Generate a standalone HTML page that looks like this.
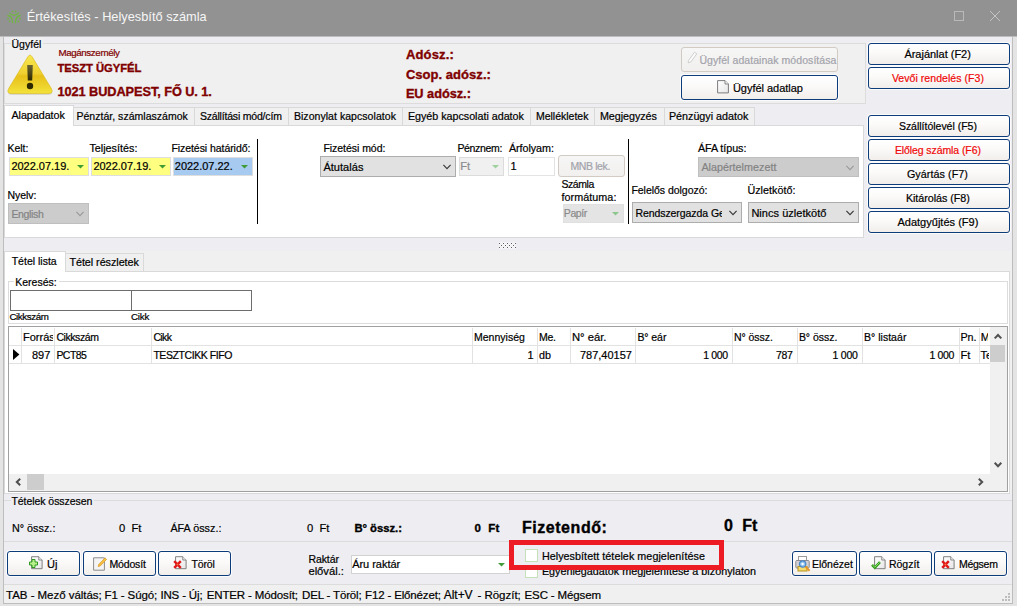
<!DOCTYPE html><html lang="hu"><head><meta charset="utf-8"><title>Értékesítés - Helyesbítő számla</title><style>html,body{margin:0;padding:0;}body{width:1017px;height:606px;overflow:hidden;position:relative;background:#eeeef2;font-family:"Liberation Sans", sans-serif;font-size:11px;color:#000;}.a{position:absolute;box-sizing:border-box;}.t{position:absolute;white-space:pre;line-height:20px;height:20px;-webkit-text-stroke:0.2px currentColor;}svg{position:absolute;overflow:visible;}</style></head><body>
<div class="a" style="left:0px;top:0px;width:1017px;height:36px;background:#929292;"></div>
<div class="a" style="left:0px;top:36px;width:1017px;height:1px;background:#bcbcbe;"></div>
<div class="a" style="left:0px;top:37px;width:3px;height:569px;background:#e4e4e4;"></div>
<div class="a" style="left:3px;top:37px;width:1px;height:567px;background:#bdbdbd;"></div>
<div class="a" style="left:1013px;top:37px;width:4px;height:569px;background:#e4e4e4;"></div>
<div class="a" style="left:1012px;top:37px;width:1px;height:567px;background:#bdbdbd;"></div>
<div class="a" style="left:0px;top:604px;width:1017px;height:2px;background:#e4e4e4;"></div>
<div class="a" style="left:3px;top:603px;width:1010px;height:1px;background:#bdbdbd;"></div>
<svg style="left:0px;top:0px" width="30" height="30" viewBox="0 0 30 30"><g fill="none" stroke="#70b545" stroke-width="1.3" stroke-linecap="round"><path d="M9.6 13.1 Q14 17.4 18.6 12.9"/><path d="M7.9 15.5 Q12.6 16.4 12.5 22.6"/><path d="M20.3 15.5 Q15.5 16.2 15.4 22.8"/></g><g fill="#70b545"><circle cx="12.5" cy="11.4" r="0.85"/><circle cx="15.6" cy="11.4" r="0.85"/><circle cx="8" cy="18.7" r="0.85"/><circle cx="9.6" cy="21.3" r="0.85"/><circle cx="20" cy="18.7" r="0.85"/><circle cx="18.5" cy="21.4" r="0.85"/></g></svg>
<div class="a" style="left:954px;top:11px;width:10px;height:10px;border:1px solid #b9b9b9;"></div>
<svg style="left:990px;top:11px" width="10" height="10" viewBox="0 0 10 10"><path d="M0 0 L10 10 M10 0 L0 10" stroke="#c4c4c4" stroke-width="1" fill="none"/></svg>
<div class="a" style="left:4px;top:43px;width:862px;height:61px;background:#f0f0f0;border:1px solid #dcdcdc;"></div>
<div class="a" style="left:11px;top:38px;width:32px;height:12px;background:#f0f0f0;"></div>
<svg style="left:7px;top:53px" width="47" height="44" viewBox="0 0 47 44">
<defs><linearGradient id="wg" x1="0" y1="0" x2="0" y2="1"><stop offset="0" stop-color="#f6e84e"/><stop offset="0.48" stop-color="#efd030"/><stop offset="0.54" stop-color="#e8c01a"/><stop offset="1" stop-color="#f2e23a"/></linearGradient>
<linearGradient id="wx" x1="0" y1="0" x2="0" y2="1"><stop offset="0" stop-color="#6a6432"/><stop offset="1" stop-color="#2e2800"/></linearGradient></defs>
<path d="M25.3 4.1 L44.0 35.0 Q47.4 40.6 40.9 40.6 L5.1 40.6 Q-1.4 40.6 2.0 35.0 L20.7 4.1 Q23.0 0.2 25.3 4.1 Z" fill="#d9d9d9" transform="translate(0,1.5)"/>
<path d="M25.3 4.1 L44.0 35.0 Q47.4 40.6 40.9 40.6 L5.1 40.6 Q-1.4 40.6 2.0 35.0 L20.7 4.1 Q23.0 0.2 25.3 4.1 Z" fill="url(#wg)" stroke="#e0c228" stroke-width="0.8"/>
<path d="M20.2 12 L25.8 12 L25.2 27.6 L20.8 27.6 Z" fill="url(#wx)"/><circle cx="23" cy="33" r="3.2" fill="#2e2800"/></svg>
<div class="a" style="left:681px;top:47px;width:157px;height:25px;background:linear-gradient(#f6f6f6,#f1f0ee);border:1px solid #d2cbc4;border-radius:3px;"></div>
<svg style="left:687px;top:51px" width="11" height="13" viewBox="0 0 11 13"><path d="M1.5 9.5 L7.5 1.2 L9.8 2.8 L3.8 11 L1.2 11.8 Z" fill="#fbfbfb" stroke="#c9c9c9" stroke-width="0.9"/></svg>
<div class="a" style="left:681px;top:75px;width:157px;height:25px;background:linear-gradient(#ffffff 0%,#fbfaf9 45%,#f1eeeb 100%);border:1px solid #0d3c7a;border-radius:3px;box-shadow:0 0 0 1px rgba(255,255,255,0.75);"></div>
<svg style="left:717px;top:80px" width="12" height="13.5" viewBox="0 0 12 13.5"><defs><linearGradient id="pg717" x1="0" y1="0" x2="1" y2="1"><stop offset="0" stop-color="#ffffff"/><stop offset="1" stop-color="#e6e6e6"/></linearGradient></defs><path d="M0.6 0.6 L8 0.6 L11.4 4 L11.4 12.9 L0.6 12.9 Z" fill="url(#pg717)" stroke="#7c7c7c" stroke-width="1"/><path d="M8 0.6 L8 4 L11.4 4" fill="#f4f4f4" stroke="#7c7c7c" stroke-width="0.9"/></svg>
<div class="a" style="left:868px;top:43px;width:142px;height:22px;background:linear-gradient(#ffffff 0%,#fbfaf9 45%,#f1eeeb 100%);border:1px solid #0d3c7a;border-radius:3px;box-shadow:0 0 0 1px rgba(255,255,255,0.75);"></div>
<div class="a" style="left:868px;top:67px;width:142px;height:22px;background:linear-gradient(#ffffff 0%,#fbfaf9 45%,#f1eeeb 100%);border:1px solid #0d3c7a;border-radius:3px;box-shadow:0 0 0 1px rgba(255,255,255,0.75);"></div>
<div class="a" style="left:868px;top:115px;width:142px;height:22px;background:linear-gradient(#ffffff 0%,#fbfaf9 45%,#f1eeeb 100%);border:1px solid #0d3c7a;border-radius:3px;box-shadow:0 0 0 1px rgba(255,255,255,0.75);"></div>
<div class="a" style="left:868px;top:139px;width:142px;height:22px;background:linear-gradient(#ffffff 0%,#fbfaf9 45%,#f1eeeb 100%);border:1px solid #0d3c7a;border-radius:3px;box-shadow:0 0 0 1px rgba(255,255,255,0.75);"></div>
<div class="a" style="left:868px;top:163px;width:142px;height:22px;background:linear-gradient(#ffffff 0%,#fbfaf9 45%,#f1eeeb 100%);border:1px solid #0d3c7a;border-radius:3px;box-shadow:0 0 0 1px rgba(255,255,255,0.75);"></div>
<div class="a" style="left:868px;top:187px;width:142px;height:22px;background:linear-gradient(#ffffff 0%,#fbfaf9 45%,#f1eeeb 100%);border:1px solid #0d3c7a;border-radius:3px;box-shadow:0 0 0 1px rgba(255,255,255,0.75);"></div>
<div class="a" style="left:868px;top:211px;width:142px;height:22px;background:linear-gradient(#ffffff 0%,#fbfaf9 45%,#f1eeeb 100%);border:1px solid #0d3c7a;border-radius:3px;box-shadow:0 0 0 1px rgba(255,255,255,0.75);"></div>
<div class="a" style="left:4px;top:125px;width:860px;height:113px;background:#fff;border:1px solid #d9d9d9;"></div>
<div class="a" style="left:72px;top:107px;width:683px;height:19px;background:#f0f0f0;border:1px solid #d9d9d9;"></div>
<div class="a" style="left:194px;top:108px;width:1px;height:17px;background:#d9d9d9;"></div>
<div class="a" style="left:288px;top:108px;width:1px;height:17px;background:#d9d9d9;"></div>
<div class="a" style="left:402px;top:108px;width:1px;height:17px;background:#d9d9d9;"></div>
<div class="a" style="left:530px;top:108px;width:1px;height:17px;background:#d9d9d9;"></div>
<div class="a" style="left:594px;top:108px;width:1px;height:17px;background:#d9d9d9;"></div>
<div class="a" style="left:664px;top:108px;width:1px;height:17px;background:#d9d9d9;"></div>
<div class="a" style="left:754px;top:108px;width:1px;height:17px;background:#d9d9d9;"></div>
<div class="a" style="left:4px;top:105px;width:70px;height:21px;background:#fff;border:1px solid #d9d9d9;border-bottom:none;"></div>
<div class="a" style="left:9px;top:157px;width:80px;height:19px;background:#ffff80;border:1px solid #dedede;"></div>
<svg style="left:77px;top:165px" width="7" height="4" viewBox="0 0 7 4"><path d="M0 0 L7 0 L3.5 3.6 Z" fill="#3f9c35"/></svg>
<div class="a" style="left:91px;top:157px;width:80px;height:19px;background:#ffff80;border:1px solid #dedede;"></div>
<svg style="left:159px;top:165px" width="7" height="4" viewBox="0 0 7 4"><path d="M0 0 L7 0 L3.5 3.6 Z" fill="#3f9c35"/></svg>
<div class="a" style="left:173px;top:157px;width:80px;height:19px;background:#a6caf0;border:1px solid #dedede;"></div>
<svg style="left:241px;top:165px" width="7" height="4" viewBox="0 0 7 4"><path d="M0 0 L7 0 L3.5 3.6 Z" fill="#3f9c35"/></svg>
<div class="a" style="left:257px;top:139px;width:1px;height:85px;background:#000;"></div>
<div class="a" style="left:8px;top:203px;width:81px;height:21px;background:#cccccc;border:1px solid #bfbfbf;"></div>
<svg style="left:76px;top:211px" width="8" height="5" viewBox="0 0 8 5"><path d="M0.4 0.9 L4 4.6 L7.6 0.9" fill="none" stroke="#9a9a9a" stroke-width="1.15"/></svg>
<div class="a" style="left:320px;top:156px;width:136px;height:21px;background:#e1e1e1;border:1px solid #adadad;"></div>
<svg style="left:443px;top:164px" width="8" height="5" viewBox="0 0 8 5"><path d="M0.4 0.9 L4 4.6 L7.6 0.9" fill="none" stroke="#383838" stroke-width="1.15"/></svg>
<div class="a" style="left:459px;top:157px;width:45px;height:19px;background:#f0f0f0;border:1px solid #dcdcdc;"></div>
<svg style="left:492px;top:165px" width="7" height="4" viewBox="0 0 7 4"><path d="M0 0 L7 0 L3.5 3.6 Z" fill="#9fd09f"/></svg>
<div class="a" style="left:508px;top:157px;width:47px;height:19px;background:#fff;border:1px solid #e3e3e3;"></div>
<div class="a" style="left:558px;top:155px;width:67px;height:22px;background:linear-gradient(#f6f6f6,#f1f0ee);border:1px solid #d2cbc4;border-radius:3px;"></div>
<div class="a" style="left:563px;top:204px;width:61px;height:19px;background:#e4e4e4;border:1px solid #e0e0e0;"></div>
<svg style="left:612px;top:212px" width="7" height="4" viewBox="0 0 7 4"><path d="M0 0 L7 0 L3.5 3.6 Z" fill="#8cc68c"/></svg>
<div class="a" style="left:628px;top:139px;width:1px;height:85px;background:#000;"></div>
<div class="a" style="left:698px;top:157px;width:161px;height:20px;background:#cccccc;border:1px solid #bfbfbf;"></div>
<svg style="left:846px;top:165px" width="8" height="5" viewBox="0 0 8 5"><path d="M0.4 0.9 L4 4.6 L7.6 0.9" fill="none" stroke="#9a9a9a" stroke-width="1.15"/></svg>
<div class="a" style="left:632px;top:202px;width:110px;height:21px;background:#e1e1e1;border:1px solid #adadad;"></div>
<svg style="left:729px;top:210px" width="8" height="5" viewBox="0 0 8 5"><path d="M0.4 0.9 L4 4.6 L7.6 0.9" fill="none" stroke="#383838" stroke-width="1.15"/></svg>
<div class="a" style="left:748px;top:202px;width:111px;height:21px;background:#e1e1e1;border:1px solid #adadad;"></div>
<svg style="left:846px;top:210px" width="8" height="5" viewBox="0 0 8 5"><path d="M0.4 0.9 L4 4.6 L7.6 0.9" fill="none" stroke="#383838" stroke-width="1.15"/></svg>
<div class="a" style="left:4px;top:251px;width:1008px;height:243px;background:#f0f0f0;"></div>
<svg style="left:498px;top:242px" width="19" height="7" viewBox="0 0 19 7" shape-rendering="crispEdges"><g fill="#fafafc"><rect x="1" y="0" width="1" height="1"/><rect x="3" y="0" width="1" height="1"/><rect x="5" y="0" width="1" height="1"/><rect x="7" y="0" width="1" height="1"/><rect x="9" y="0" width="1" height="1"/><rect x="11" y="0" width="1" height="1"/><rect x="13" y="0" width="1" height="1"/><rect x="15" y="0" width="1" height="1"/><rect x="17" y="0" width="1" height="1"/><rect x="2" y="1" width="1" height="1"/><rect x="4" y="1" width="1" height="1"/><rect x="6" y="1" width="1" height="1"/><rect x="8" y="1" width="1" height="1"/><rect x="10" y="1" width="1" height="1"/><rect x="12" y="1" width="1" height="1"/><rect x="14" y="1" width="1" height="1"/><rect x="16" y="1" width="1" height="1"/><rect x="1" y="2" width="1" height="1"/><rect x="3" y="2" width="1" height="1"/><rect x="5" y="2" width="1" height="1"/><rect x="7" y="2" width="1" height="1"/><rect x="9" y="2" width="1" height="1"/><rect x="11" y="2" width="1" height="1"/><rect x="13" y="2" width="1" height="1"/><rect x="15" y="2" width="1" height="1"/><rect x="17" y="2" width="1" height="1"/><rect x="2" y="3" width="1" height="1"/><rect x="4" y="3" width="1" height="1"/><rect x="6" y="3" width="1" height="1"/><rect x="8" y="3" width="1" height="1"/><rect x="10" y="3" width="1" height="1"/><rect x="12" y="3" width="1" height="1"/><rect x="14" y="3" width="1" height="1"/><rect x="16" y="3" width="1" height="1"/><rect x="1" y="4" width="1" height="1"/><rect x="3" y="4" width="1" height="1"/><rect x="5" y="4" width="1" height="1"/><rect x="7" y="4" width="1" height="1"/><rect x="9" y="4" width="1" height="1"/><rect x="11" y="4" width="1" height="1"/><rect x="13" y="4" width="1" height="1"/><rect x="15" y="4" width="1" height="1"/><rect x="17" y="4" width="1" height="1"/><rect x="2" y="5" width="1" height="1"/><rect x="4" y="5" width="1" height="1"/><rect x="6" y="5" width="1" height="1"/><rect x="8" y="5" width="1" height="1"/><rect x="10" y="5" width="1" height="1"/><rect x="12" y="5" width="1" height="1"/><rect x="14" y="5" width="1" height="1"/><rect x="16" y="5" width="1" height="1"/><rect x="1" y="6" width="1" height="1"/><rect x="3" y="6" width="1" height="1"/><rect x="5" y="6" width="1" height="1"/><rect x="7" y="6" width="1" height="1"/><rect x="9" y="6" width="1" height="1"/><rect x="11" y="6" width="1" height="1"/><rect x="13" y="6" width="1" height="1"/><rect x="15" y="6" width="1" height="1"/><rect x="17" y="6" width="1" height="1"/></g><g fill="#5c5c5c"><rect x="1" y="1" width="1" height="1"/><rect x="5" y="1" width="1" height="1"/><rect x="9" y="1" width="1" height="1"/><rect x="13" y="1" width="1" height="1"/><rect x="17" y="1" width="1" height="1"/><rect x="3" y="3" width="1" height="1"/><rect x="7" y="3" width="1" height="1"/><rect x="11" y="3" width="1" height="1"/><rect x="15" y="3" width="1" height="1"/><rect x="1" y="5" width="1" height="1"/><rect x="5" y="5" width="1" height="1"/><rect x="9" y="5" width="1" height="1"/><rect x="13" y="5" width="1" height="1"/><rect x="17" y="5" width="1" height="1"/></g></svg>
<div class="a" style="left:4px;top:271px;width:1006px;height:223px;background:#fff;border:1px solid #d9d9d9;"></div>
<div class="a" style="left:65px;top:253px;width:79px;height:19px;background:#f0f0f0;border:1px solid #d9d9d9;"></div>
<div class="a" style="left:4px;top:251px;width:62px;height:21px;background:#fff;border:1px solid #d9d9d9;border-bottom:none;"></div>
<div class="a" style="left:8px;top:281px;width:1000px;height:43px;border:1px solid #dcdcdc;"></div>
<div class="a" style="left:14px;top:276px;width:45px;height:12px;background:#fff;"></div>
<div class="a" style="left:10px;top:290px;width:122px;height:21px;background:#fff;border:1px solid #6d6d6d;"></div>
<div class="a" style="left:131px;top:290px;width:121px;height:21px;background:#fff;border:1px solid #6d6d6d;"></div>
<div class="a" style="left:8px;top:326px;width:1000px;height:166px;background:#fff;border:1px solid #a0a0a0;"></div>
<div class="a" style="left:9px;top:345px;width:981px;height:1px;background:#e2e2e2;"></div>
<div class="a" style="left:9px;top:363px;width:981px;height:1px;background:#e2e2e2;"></div>
<div class="a" style="left:21px;top:328px;width:1px;height:36px;background:#e2e2e2;"></div>
<div class="a" style="left:54px;top:328px;width:1px;height:36px;background:#e2e2e2;"></div>
<div class="a" style="left:151px;top:328px;width:1px;height:36px;background:#e2e2e2;"></div>
<div class="a" style="left:472px;top:328px;width:1px;height:36px;background:#e2e2e2;"></div>
<div class="a" style="left:537px;top:328px;width:1px;height:36px;background:#e2e2e2;"></div>
<div class="a" style="left:570px;top:328px;width:1px;height:36px;background:#e2e2e2;"></div>
<div class="a" style="left:635px;top:328px;width:1px;height:36px;background:#e2e2e2;"></div>
<div class="a" style="left:732px;top:328px;width:1px;height:36px;background:#e2e2e2;"></div>
<div class="a" style="left:797px;top:328px;width:1px;height:36px;background:#e2e2e2;"></div>
<div class="a" style="left:862px;top:328px;width:1px;height:36px;background:#e2e2e2;"></div>
<div class="a" style="left:959px;top:328px;width:1px;height:36px;background:#e2e2e2;"></div>
<div class="a" style="left:979px;top:328px;width:1px;height:36px;background:#e2e2e2;"></div>
<svg style="left:13px;top:349px" width="7" height="11" viewBox="0 0 7 11"><path d="M0 0 L6.4 5.5 L0 11 Z" fill="#000"/></svg>
<div class="a" style="left:990px;top:327px;width:17px;height:164px;background:#f0f0f0;"></div>
<div class="a" style="left:9px;top:474px;width:998px;height:17px;background:#f0f0f0;"></div>
<div class="a" style="left:990px;top:345px;width:15px;height:17px;background:#cdcdcd;"></div>
<div class="a" style="left:27px;top:474px;width:17px;height:16px;background:#cdcdcd;"></div>
<svg style="left:993.5px;top:333px" width="8" height="6" viewBox="0 0 8 6"><path d="M0.7 5.4 L4 2 L7.3 5.4" fill="none" stroke="#505050" stroke-width="2"/></svg>
<svg style="left:993.5px;top:462px" width="8" height="6" viewBox="0 0 8 6"><path d="M0.7 0.8 L4 4.2 L7.3 0.8" fill="none" stroke="#505050" stroke-width="2"/></svg>
<svg style="left:15px;top:478px" width="6" height="8" viewBox="0 0 6 8"><path d="M5.2 0.7 L1.8 4 L5.2 7.3" fill="none" stroke="#505050" stroke-width="2"/></svg>
<svg style="left:978px;top:478px" width="6" height="8" viewBox="0 0 6 8"><path d="M0.8 0.7 L4.2 4 L0.8 7.3" fill="none" stroke="#505050" stroke-width="2"/></svg>
<div class="a" style="left:4px;top:500px;width:1008px;height:42px;border:1px solid #dcdcdc;border-left:none;border-right:none;"></div>
<div class="a" style="left:11px;top:495px;width:83px;height:12px;background:#eeeef2;"></div>
<div class="a" style="left:7px;top:551px;width:73px;height:25px;background:linear-gradient(#ffffff 0%,#fbfaf9 45%,#f1eeeb 100%);border:1px solid #0d3c7a;border-radius:3px;box-shadow:0 0 0 1px rgba(255,255,255,0.75);"></div>
<div class="a" style="left:83px;top:551px;width:73px;height:25px;background:linear-gradient(#ffffff 0%,#fbfaf9 45%,#f1eeeb 100%);border:1px solid #0d3c7a;border-radius:3px;box-shadow:0 0 0 1px rgba(255,255,255,0.75);"></div>
<div class="a" style="left:158px;top:551px;width:73px;height:25px;background:linear-gradient(#ffffff 0%,#fbfaf9 45%,#f1eeeb 100%);border:1px solid #0d3c7a;border-radius:3px;box-shadow:0 0 0 1px rgba(255,255,255,0.75);"></div>
<div class="a" style="left:792px;top:551px;width:65px;height:25px;background:linear-gradient(#ffffff 0%,#fbfaf9 45%,#f1eeeb 100%);border:1px solid #0d3c7a;border-radius:3px;box-shadow:0 0 0 1px rgba(255,255,255,0.75);"></div>
<div class="a" style="left:859px;top:551px;width:73px;height:25px;background:linear-gradient(#ffffff 0%,#fbfaf9 45%,#f1eeeb 100%);border:1px solid #0d3c7a;border-radius:3px;box-shadow:0 0 0 1px rgba(255,255,255,0.75);"></div>
<div class="a" style="left:934px;top:551px;width:73px;height:25px;background:linear-gradient(#ffffff 0%,#fbfaf9 45%,#f1eeeb 100%);border:1px solid #0d3c7a;border-radius:3px;box-shadow:0 0 0 1px rgba(255,255,255,0.75);"></div>
<svg style="left:31.0px;top:556.2px" width="11.7" height="13.4" viewBox="0 0 12 13.5"><defs><linearGradient id="pg31" x1="0" y1="0" x2="1" y2="1"><stop offset="0" stop-color="#ffffff"/><stop offset="1" stop-color="#e6e6e6"/></linearGradient></defs><path d="M0.6 0.6 L8 0.6 L11.4 4 L11.4 12.9 L0.6 12.9 Z" fill="url(#pg31)" stroke="#7c7c7c" stroke-width="1"/><path d="M8 0.6 L8 4 L11.4 4" fill="#f4f4f4" stroke="#7c7c7c" stroke-width="0.9"/></svg>
<svg style="left:28.5px;top:559.2px" width="9" height="9" viewBox="0 0 9 9"><path d="M3 0.5 L6 0.5 L6 3 L8.5 3 L8.5 6 L6 6 L6 8.5 L3 8.5 L3 6 L0.5 6 L0.5 3 L3 3 Z" fill="#b8f08c" stroke="#2f9a1e" stroke-width="1"/></svg>
<svg style="left:93px;top:556.5px" width="14" height="14" viewBox="0 0 14 14"><path d="M0.6 0.8 L11.4 0.8 L11.4 13.2 L0.6 13.2 Z" fill="#f4f4f4" stroke="#8c8c8c" stroke-width="1"/><path d="M5.6 7.6 L12 0.9 L13.6 2.4 L7.2 9 L5.2 9.6 Z" fill="#f6c046" stroke="#d89a20" stroke-width="0.7"/></svg>
<svg style="left:175.0px;top:556.2px" width="11.7" height="13.4" viewBox="0 0 12 13.5"><defs><linearGradient id="pg175" x1="0" y1="0" x2="1" y2="1"><stop offset="0" stop-color="#ffffff"/><stop offset="1" stop-color="#e6e6e6"/></linearGradient></defs><path d="M0.6 0.6 L8 0.6 L11.4 4 L11.4 12.9 L0.6 12.9 Z" fill="url(#pg175)" stroke="#7c7c7c" stroke-width="1"/><path d="M8 0.6 L8 4 L11.4 4" fill="#f4f4f4" stroke="#7c7c7c" stroke-width="0.9"/></svg>
<svg style="left:172.5px;top:559.7px" width="9" height="9" viewBox="0 0 9 9"><path d="M1.2 1.2 L7.8 7.8 M7.8 1.2 L1.2 7.8" stroke="#e01818" stroke-width="2.4" fill="none"/><circle cx="4.5" cy="4.5" r="1" fill="#ff6a3a"/></svg>
<svg style="left:795px;top:555.5px" width="16" height="16" viewBox="0 0 16 16"><rect x="3.5" y="0.5" width="8" height="6" fill="#fff" stroke="#9a9a9a"/><rect x="0.8" y="4.5" width="13.4" height="7.5" rx="1" fill="#d2d2d6" stroke="#8a8a90"/><rect x="3" y="10.5" width="9" height="4.5" fill="#f3dc72" stroke="#b8941c"/><circle cx="7.6" cy="8" r="3.2" fill="#8fc2ee" stroke="#4a86c8" stroke-width="1.2"/><circle cx="7.6" cy="8" r="1.2" fill="#fff"/><path d="M10.4 10.6 L14.6 14.8" stroke="#e8962a" stroke-width="2"/></svg>
<svg style="left:873.5px;top:556.2px" width="11.7" height="13.4" viewBox="0 0 12 13.5"><defs><linearGradient id="pg873" x1="0" y1="0" x2="1" y2="1"><stop offset="0" stop-color="#ffffff"/><stop offset="1" stop-color="#e6e6e6"/></linearGradient></defs><path d="M0.6 0.6 L8 0.6 L11.4 4 L11.4 12.9 L0.6 12.9 Z" fill="url(#pg873)" stroke="#7c7c7c" stroke-width="1"/><path d="M8 0.6 L8 4 L11.4 4" fill="#f4f4f4" stroke="#7c7c7c" stroke-width="0.9"/></svg>
<svg style="left:871px;top:560.7px" width="10" height="8" viewBox="0 0 10 8"><path d="M1 3.8 L3.8 6.6 L9 1.2" stroke="#2f9a1e" stroke-width="2.6" fill="none"/><path d="M1.4 3.9 L3.8 6.2 L8.6 1.5" stroke="#9be86a" stroke-width="0.9" fill="none"/></svg>
<svg style="left:943.0px;top:556.2px" width="11.7" height="13.4" viewBox="0 0 12 13.5"><defs><linearGradient id="pg943" x1="0" y1="0" x2="1" y2="1"><stop offset="0" stop-color="#ffffff"/><stop offset="1" stop-color="#e6e6e6"/></linearGradient></defs><path d="M0.6 0.6 L8 0.6 L11.4 4 L11.4 12.9 L0.6 12.9 Z" fill="url(#pg943)" stroke="#7c7c7c" stroke-width="1"/><path d="M8 0.6 L8 4 L11.4 4" fill="#f4f4f4" stroke="#7c7c7c" stroke-width="0.9"/></svg>
<svg style="left:940.5px;top:559.7px" width="9" height="9" viewBox="0 0 9 9"><path d="M1.2 1.2 L7.8 7.8 M7.8 1.2 L1.2 7.8" stroke="#e01818" stroke-width="2.4" fill="none"/><circle cx="4.5" cy="4.5" r="1" fill="#ff6a3a"/></svg>
<div class="a" style="left:351px;top:555px;width:159px;height:19px;background:#fff;border:1px solid #d2d2d2;"></div>
<svg style="left:498px;top:563px" width="7" height="4" viewBox="0 0 7 4"><path d="M0 0 L7 0 L3.5 3.6 Z" fill="#3f9c35"/></svg>
<div class="a" style="left:525px;top:565px;width:13px;height:13px;background:#fff;border:1px solid #c3e2b8;"></div>
<div class="a" style="left:4px;top:584px;width:1008px;height:1px;background:#dcdcdc;"></div>
<div class="a" style="left:4px;top:585px;width:1008px;height:18px;background:#f0f0f0;"></div>
<svg style="left:1002px;top:593px" width="9" height="9" viewBox="0 0 9 9"><g fill="#bdbdbd"><rect x="6" y="0" width="2" height="2"/><rect x="3" y="3" width="2" height="2"/><rect x="6" y="3" width="2" height="2"/><rect x="0" y="6" width="2" height="2"/><rect x="3" y="6" width="2" height="2"/><rect x="6" y="6" width="2" height="2"/></g></svg>
<span class="t" id="t0" style="top:6.5px;font-size:12.75px;color:#f6f6f6;letter-spacing:0.024px;left:26.70px;-webkit-text-stroke:0;">Értékesítés - Helyesbítő számla</span>
<span class="t" id="t1" style="top:34.25px;font-size:10.5px;letter-spacing:0.047px;left:11.40px;">Ügyfél</span>
<span class="t" id="t2" style="top:42.5px;font-size:9.75px;color:#800000;letter-spacing:-0.371px;left:58.40px;">Magánszemély</span>
<span class="t" id="t3" style="top:58.0px;font-size:11.25px;font-weight:bold;-webkit-text-stroke:0.35px currentColor;color:#800000;letter-spacing:-0.034px;left:57.40px;">TESZT ÜGYFÉL</span>
<span class="t" id="t4" style="top:81.5px;font-size:12.75px;font-weight:bold;-webkit-text-stroke:0.35px currentColor;color:#800000;letter-spacing:-0.063px;left:57.40px;">1021 BUDAPEST, FŐ U. 1.</span>
<span class="t" id="t5" style="top:44.5px;font-size:13.0px;font-weight:bold;-webkit-text-stroke:0.35px currentColor;color:#800000;letter-spacing:0.174px;left:405.90px;">Adósz.:</span>
<span class="t" id="t6" style="top:64.5px;font-size:13.0px;font-weight:bold;-webkit-text-stroke:0.35px currentColor;color:#800000;letter-spacing:0.040px;left:405.90px;">Csop. adósz.:</span>
<span class="t" id="t7" style="top:83.5px;font-size:12.75px;font-weight:bold;-webkit-text-stroke:0.35px currentColor;color:#800000;letter-spacing:-0.021px;left:405.90px;">EU adósz.:</span>
<span class="t" id="t8" style="top:50.25px;font-size:10.5px;color:#a3a3ab;letter-spacing:0.061px;left:699.40px;">Ügyfél adatainak módosítása</span>
<span class="t" id="t9" style="top:77.75px;font-size:11.0px;letter-spacing:-0.025px;left:732.90px;">Ügyfél adatlap</span>
<span class="t" id="t10" style="top:44.25px;font-size:11.0px;letter-spacing:-0.011px;left:904.40px;">Árajánlat (F2)</span>
<span class="t" id="t11" style="top:68.25px;font-size:10.5px;color:#f00808;letter-spacing:0.053px;left:891.90px;">Vevői rendelés (F3)</span>
<span class="t" id="t12" style="top:116.25px;font-size:10.5px;letter-spacing:-0.012px;left:898.90px;">Szállítólevél (F5)</span>
<span class="t" id="t13" style="top:140.25px;font-size:10.5px;color:#f00808;letter-spacing:-0.090px;left:894.90px;">Előleg számla (F6)</span>
<span class="t" id="t14" style="top:164.25px;font-size:10.75px;letter-spacing:0.061px;left:906.90px;">Gyártás (F7)</span>
<span class="t" id="t15" style="top:188.25px;font-size:10.75px;letter-spacing:-0.041px;left:905.90px;">Kitárolás (F8)</span>
<span class="t" id="t16" style="top:212.25px;font-size:11.0px;letter-spacing:0.020px;left:897.40px;">Adatgyűjtés (F9)</span>
<span class="t" id="t17" style="top:106.25px;font-size:10.5px;letter-spacing:0.030px;left:76.40px;">Pénztár, számlaszámok</span>
<span class="t" id="t18" style="top:106.25px;font-size:10.5px;letter-spacing:-0.188px;left:199.90px;">Szállítási mód/cím</span>
<span class="t" id="t19" style="top:106.25px;font-size:10.5px;letter-spacing:0.051px;left:293.90px;">Bizonylat kapcsolatok</span>
<span class="t" id="t20" style="top:106.25px;font-size:10.75px;letter-spacing:-0.025px;left:407.90px;">Egyéb kapcsolati adatok</span>
<span class="t" id="t21" style="top:106.25px;font-size:10.5px;letter-spacing:-0.003px;left:535.90px;">Mellékletek</span>
<span class="t" id="t22" style="top:106.25px;font-size:10.75px;letter-spacing:-0.042px;left:599.90px;">Megjegyzés</span>
<span class="t" id="t23" style="top:106.25px;font-size:10.75px;left:668.90px;">Pénzügyi adatok</span>
<span class="t" id="t24" style="top:105.25px;font-size:10.75px;letter-spacing:-0.033px;left:11.40px;">Alapadatok</span>
<span class="t" id="t25" style="top:138.25px;font-size:10.5px;letter-spacing:-0.004px;left:7.40px;">Kelt:</span>
<span class="t" id="t26" style="top:138.25px;font-size:10.75px;letter-spacing:0.019px;left:89.40px;">Teljesítés:</span>
<span class="t" id="t27" style="top:138.25px;font-size:10.5px;letter-spacing:-0.057px;left:171.40px;">Fizetési határidő:</span>
<span class="t" id="t28" style="top:156.25px;font-size:11.0px;letter-spacing:-0.013px;left:11.40px;">2022.07.19.</span>
<span class="t" id="t29" style="top:156.25px;font-size:11.0px;letter-spacing:-0.013px;left:93.40px;">2022.07.19.</span>
<span class="t" id="t30" style="top:156.25px;font-size:11.0px;letter-spacing:-0.013px;left:174.80px;">2022.07.22.</span>
<span class="t" id="t31" style="top:185.25px;font-size:10.5px;letter-spacing:-0.037px;left:7.40px;">Nyelv:</span>
<span class="t" id="t32" style="top:204.25px;font-size:10.5px;color:#838383;letter-spacing:-0.326px;left:11.40px;">English</span>
<span class="t" id="t33" style="top:138.25px;font-size:10.5px;letter-spacing:-0.036px;left:323.40px;">Fizetési mód:</span>
<span class="t" id="t34" style="top:157.0px;font-size:11.0px;letter-spacing:0.036px;left:323.40px;">Átutalás</span>
<span class="t" id="t35" style="top:138.25px;font-size:10.5px;letter-spacing:-0.326px;left:457.40px;">Pénznem:</span>
<span class="t" id="t36" style="top:156.0px;font-size:11.25px;color:#8c8c8c;left:460.20px;">Ft</span>
<span class="t" id="t37" style="top:138.25px;font-size:10.75px;letter-spacing:-0.051px;left:508.90px;">Árfolyam:</span>
<span class="t" id="t38" style="top:156.25px;font-size:11px;left:510.40px;">1</span>
<span class="t" id="t39" style="top:156.25px;font-size:10.5px;color:#a3a3ab;letter-spacing:-0.371px;left:570.40px;">MNB lek.</span>
<span class="t" id="t40" style="top:174.25px;font-size:10.5px;letter-spacing:-0.403px;left:561.40px;">Számla</span>
<span class="t" id="t41" style="top:186.75px;font-size:10.75px;letter-spacing:0.069px;left:561.40px;">formátuma:</span>
<span class="t" id="t42" style="top:203.25px;font-size:10.5px;color:#8a8a8a;letter-spacing:-0.402px;left:563.80px;">Papír</span>
<span class="t" id="t43" style="top:138.25px;font-size:10.75px;letter-spacing:-0.056px;left:697.90px;">ÁFA típus:</span>
<span class="t" id="t44" style="top:157.25px;font-size:10.75px;color:#838383;letter-spacing:0.021px;left:701.40px;">Alapértelmezett</span>
<span class="t" id="t45" style="top:180.25px;font-size:10.5px;letter-spacing:-0.031px;left:631.40px;">Felelős dolgozó:</span>
<span class="t" id="t46" style="top:203.25px;font-size:10.5px;letter-spacing:-0.066px;left:635.40px;width:87px;overflow:hidden;">Rendszergazda Ge</span>
<span class="t" id="t47" style="top:180.25px;font-size:10.75px;letter-spacing:0.021px;left:747.40px;">Üzletkötő:</span>
<span class="t" id="t48" style="top:203.25px;font-size:11.0px;letter-spacing:0.029px;left:751.40px;">Nincs üzletkötő</span>
<span class="t" id="t49" style="top:252.25px;font-size:10.75px;letter-spacing:-0.029px;left:69.40px;">Tétel részletek</span>
<span class="t" id="t50" style="top:250.75px;font-size:10.5px;letter-spacing:0.006px;left:11.70px;">Tétel lista</span>
<span class="t" id="t51" style="top:271.75px;font-size:10.5px;letter-spacing:0.009px;left:15.20px;">Keresés:</span>
<span class="t" id="t52" style="top:307.0px;font-size:9.75px;letter-spacing:-0.395px;left:9.40px;">Cikkszám</span>
<span class="t" id="t53" style="top:307.0px;font-size:9.75px;letter-spacing:-0.156px;left:130.90px;">Cikk</span>
<span class="t" id="t54" style="top:327.25px;font-size:11px;left:23.00px;width:30.4px;overflow:hidden;">Forrás</span>
<span class="t" id="t55" style="top:327.25px;font-size:10.5px;letter-spacing:-0.431px;left:56.40px;">Cikkszám</span>
<span class="t" id="t56" style="top:327.25px;font-size:10.5px;letter-spacing:-0.641px;left:153.40px;">Cikk</span>
<span class="t" id="t57" style="top:327.25px;font-size:10.5px;letter-spacing:0.027px;left:473.90px;">Mennyiség</span>
<span class="t" id="t58" style="top:327.25px;font-size:10.5px;letter-spacing:-0.258px;left:538.90px;">Me.</span>
<span class="t" id="t59" style="top:327.0px;font-size:11.25px;letter-spacing:-0.003px;left:571.90px;">N° eár.</span>
<span class="t" id="t60" style="top:327.25px;font-size:10.5px;letter-spacing:-0.059px;left:637.40px;">B° eár</span>
<span class="t" id="t61" style="top:327.25px;font-size:10.5px;letter-spacing:-0.031px;left:733.90px;">N° össz.</span>
<span class="t" id="t62" style="top:327.25px;font-size:10.5px;letter-spacing:-0.020px;left:798.90px;">B° össz.</span>
<span class="t" id="t63" style="top:327.25px;font-size:10.5px;letter-spacing:0.040px;left:863.90px;">B° listaár</span>
<span class="t" id="t64" style="top:327.25px;font-size:10.75px;letter-spacing:-0.070px;left:960.40px;">Pn.</span>
<span class="t" id="t65" style="top:327.25px;font-size:11px;left:980.70px;width:7.8px;overflow:hidden;">M</span>
<span class="t" id="t66" style="top:345.25px;font-size:11.0px;letter-spacing:0.070px;left:31.90px;">897</span>
<span class="t" id="t67" style="top:345.25px;font-size:10.5px;letter-spacing:-0.547px;left:56.40px;">PCT85</span>
<span class="t" id="t68" style="top:345.25px;font-size:10.5px;letter-spacing:-0.430px;left:153.40px;">TESZTCIKK FIFO</span>
<span class="t" id="t69" style="top:345.25px;font-size:11px;left:527.40px;">1</span>
<span class="t" id="t70" style="top:345.25px;font-size:10.75px;letter-spacing:0.031px;left:538.90px;">db</span>
<span class="t" id="t71" style="top:345.25px;font-size:11.0px;left:579.90px;">787,40157</span>
<span class="t" id="t72" style="top:345.25px;font-size:10.5px;letter-spacing:-0.320px;left:703.20px;">1 000</span>
<span class="t" id="t73" style="top:345.25px;font-size:10.5px;letter-spacing:-0.266px;left:775.90px;">787</span>
<span class="t" id="t74" style="top:345.25px;font-size:10.5px;letter-spacing:-0.195px;left:832.40px;">1 000</span>
<span class="t" id="t75" style="top:345.25px;font-size:10.5px;letter-spacing:-0.320px;left:929.40px;">1 000</span>
<span class="t" id="t76" style="top:345.0px;font-size:11.25px;left:960.40px;">Ft</span>
<span class="t" id="t77" style="top:345.25px;font-size:11px;left:980.40px;width:8.5px;overflow:hidden;">Te</span>
<span class="t" id="t78" style="top:491.25px;font-size:10.5px;letter-spacing:-0.048px;left:11.40px;">Tételek összesen</span>
<span class="t" id="t79" style="top:518.25px;font-size:10.75px;letter-spacing:0.045px;left:11.90px;">N° össz.:</span>
<span class="t" id="t80" style="top:518.0px;font-size:11.25px;letter-spacing:-0.004px;left:118.90px;">0  Ft</span>
<span class="t" id="t81" style="top:518.25px;font-size:10.75px;letter-spacing:0.023px;left:170.40px;">ÁFA össz.:</span>
<span class="t" id="t82" style="top:518.0px;font-size:11.25px;letter-spacing:-0.004px;left:306.90px;">0  Ft</span>
<span class="t" id="t83" style="top:518.0px;font-size:11.25px;font-weight:bold;-webkit-text-stroke:0.35px currentColor;letter-spacing:-0.018px;left:354.40px;">B° össz.:</span>
<span class="t" id="t84" style="top:518.0px;font-size:11.5px;font-weight:bold;-webkit-text-stroke:0.35px currentColor;letter-spacing:0.340px;left:474.40px;">0  Ft</span>
<span class="t" id="t85" style="top:517.5px;font-size:16.0px;font-weight:bold;-webkit-text-stroke:0.35px currentColor;letter-spacing:0.556px;left:521.90px;">Fizetendő:</span>
<span class="t" id="t86" style="top:516.0px;font-size:16.0px;font-weight:bold;-webkit-text-stroke:0.35px currentColor;letter-spacing:0.152px;left:723.90px;">0  Ft</span>
<span class="t" id="t87" style="top:554.25px;font-size:11.0px;letter-spacing:0.109px;left:46.90px;">Új</span>
<span class="t" id="t88" style="top:554.25px;font-size:10.5px;letter-spacing:-0.143px;left:109.40px;">Módosít</span>
<span class="t" id="t89" style="top:554.25px;font-size:10.5px;letter-spacing:-0.109px;left:191.40px;">Töröl</span>
<span class="t" id="t90" style="top:554.25px;font-size:10.5px;letter-spacing:0.018px;left:811.90px;">Előnézet</span>
<span class="t" id="t91" style="top:554.25px;font-size:10.5px;letter-spacing:0.028px;left:888.90px;">Rögzít</span>
<span class="t" id="t92" style="top:554.25px;font-size:10.5px;letter-spacing:-0.253px;left:958.90px;">Mégsem</span>
<span class="t" id="t93" style="top:548.75px;font-size:10.5px;letter-spacing:-0.087px;left:308.40px;">Raktár</span>
<span class="t" id="t94" style="top:560.5px;font-size:11.25px;letter-spacing:-0.022px;left:308.40px;">elővál.:</span>
<span class="t" id="t95" style="top:554.25px;font-size:11.0px;letter-spacing:-0.033px;left:352.20px;">Áru raktár</span>
<span class="t" id="t96" style="top:561.25px;font-size:10.75px;letter-spacing:0.016px;left:541.90px;">Egyenlegadatok megjelenítése a bizonylaton</span>
<span class="t" id="t97" style="top:546.25px;font-size:10.75px;letter-spacing:0.050px;left:541.90px;z-index:2;">Helyesbített tételek megjelenítése</span>
<span class="t" id="t98" style="top:584.75px;font-size:11.5px;letter-spacing:-0.041px;left:6.10px;">TAB - Mező váltás;</span>
<span class="t" id="t99" style="top:584.75px;font-size:11.5px;letter-spacing:-0.123px;left:104.60px;">F1 - Súgó;</span>
<span class="t" id="t100" style="top:584.75px;font-size:11.5px;letter-spacing:-0.157px;left:160.40px;">INS - Új;</span>
<span class="t" id="t101" style="top:584.75px;font-size:11.5px;letter-spacing:-0.128px;left:206.70px;">ENTER - Módosít;</span>
<span class="t" id="t102" style="top:584.75px;font-size:11.5px;letter-spacing:-0.151px;left:302.00px;">DEL - Töröl;</span>
<span class="t" id="t103" style="top:584.75px;font-size:11.5px;letter-spacing:-0.156px;left:365.10px;">F12 - Előnézet;</span>
<span class="t" id="t104" style="top:584.5px;font-size:12.0px;letter-spacing:-0.054px;left:443.80px;">Alt+V</span>
<span class="t" id="t105" style="top:584.75px;font-size:11.5px;letter-spacing:-0.009px;left:477.40px;">- Rögzít;</span>
<span class="t" id="t106" style="top:584.75px;font-size:11.5px;letter-spacing:-0.143px;left:524.60px;">ESC - Mégsem</span>
<div class="a" style="left:509px;top:540px;width:215px;height:30px;background:#eeeef2;border:5px solid #ed1c24;"></div>
<div class="a" style="left:525px;top:549px;width:13px;height:13px;background:#fff;border:1px solid #c3e2b8;"></div>
</body></html>
